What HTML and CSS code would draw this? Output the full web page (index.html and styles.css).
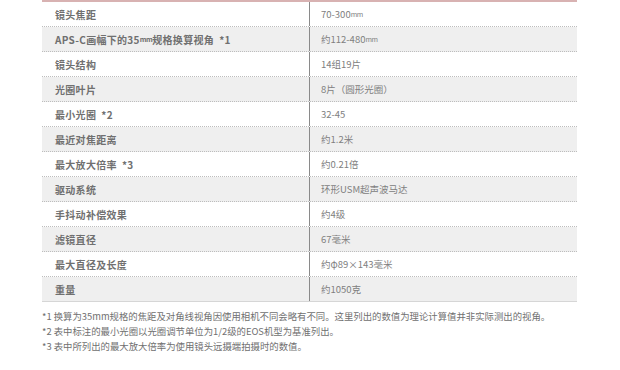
FILE: index.html
```html
<!DOCTYPE html>
<html lang="zh">
<head>
<meta charset="utf-8">
<link rel="stylesheet" href="styles.css">
</head>
<body>
<div class="wrap">
  <div class="spec">
    <div class="row"><div class="k">镜头焦距</div><div class="v">70-300<span class="mm">mm</span></div></div>
    <div class="row alt"><div class="k">APS-C画幅下的35<span class="mm">mm</span>规格换算视角&nbsp;&nbsp;*1</div><div class="v">约112-480<span class="mm">mm</span></div></div>
    <div class="row"><div class="k">镜头结构</div><div class="v">14组19片</div></div>
    <div class="row alt"><div class="k">光圈叶片</div><div class="v">8片（圆形光圈）</div></div>
    <div class="row"><div class="k">最小光圈&nbsp;&nbsp;*2</div><div class="v">32-45</div></div>
    <div class="row alt"><div class="k">最近对焦距离</div><div class="v">约1.2米</div></div>
    <div class="row"><div class="k">最大放大倍率&nbsp;&nbsp;*3</div><div class="v">约0.21倍</div></div>
    <div class="row alt"><div class="k">驱动系统</div><div class="v">环形USM超声波马达</div></div>
    <div class="row"><div class="k">手抖动补偿效果</div><div class="v">约4级</div></div>
    <div class="row alt"><div class="k">滤镜直径</div><div class="v">67毫米</div></div>
    <div class="row"><div class="k">最大直径及长度</div><div class="v">约φ89×143毫米</div></div>
    <div class="row alt last"><div class="k">重量</div><div class="v">约1050克</div></div>
  </div>
  <div class="notes">
    <p>*1 换算为35mm规格的焦距及对角线视角因使用相机不同会略有不同。这里列出的数值为理论计算值并非实际测出的视角。</p>
    <p>*2 表中标注的最小光圈以光圈调节单位为1/2级的EOS机型为基准列出。</p>
    <p>*3 表中所列出的最大放大倍率为使用镜头远摄端拍摄时的数值。</p>
  </div>
</div>
</body>
</html>
```
FILE: styles.css
```css
html, body {
  margin: 0;
  padding: 0;
  background: #fff;
}
body {
  font-family: "Noto Sans CJK SC", "Liberation Sans", sans-serif;
  width: 620px;
  height: 370px;
  overflow: hidden;
}
.wrap {
  padding-left: 42px;
  width: 535px;
}
.spec {
  border-top: 2px solid #d8b2b2;
}
.row {
  display: grid;
  grid-template-columns: 268px 1fr;
  height: 24px;
  border-bottom: 1px dotted #bdbdbd;
  background: #fff;
}
.row.alt {
  background: #efefef;
}
.row.last {
  border-bottom: 1px solid #d6d6d6;
}
.k {
  display: flex;
  align-items: center;
  padding-left: 13px;
  font-size: 10px;
  font-weight: 700;
  color: #707070;
  border-right: 1px solid #8a8a8a;
  letter-spacing: 0.3px;
}
.v {
  display: flex;
  align-items: center;
  padding-left: 11px;
  font-size: 9.5px;
  color: #808080;
}
.mm {
  font-size: 7px;
  letter-spacing: -0.5px;
}
.notes {
  padding-top: 7px;
}
.notes p {
  margin: 0;
  font-size: 9.4px;
  line-height: 15px;
  color: #707070;
  white-space: nowrap;
}
```
